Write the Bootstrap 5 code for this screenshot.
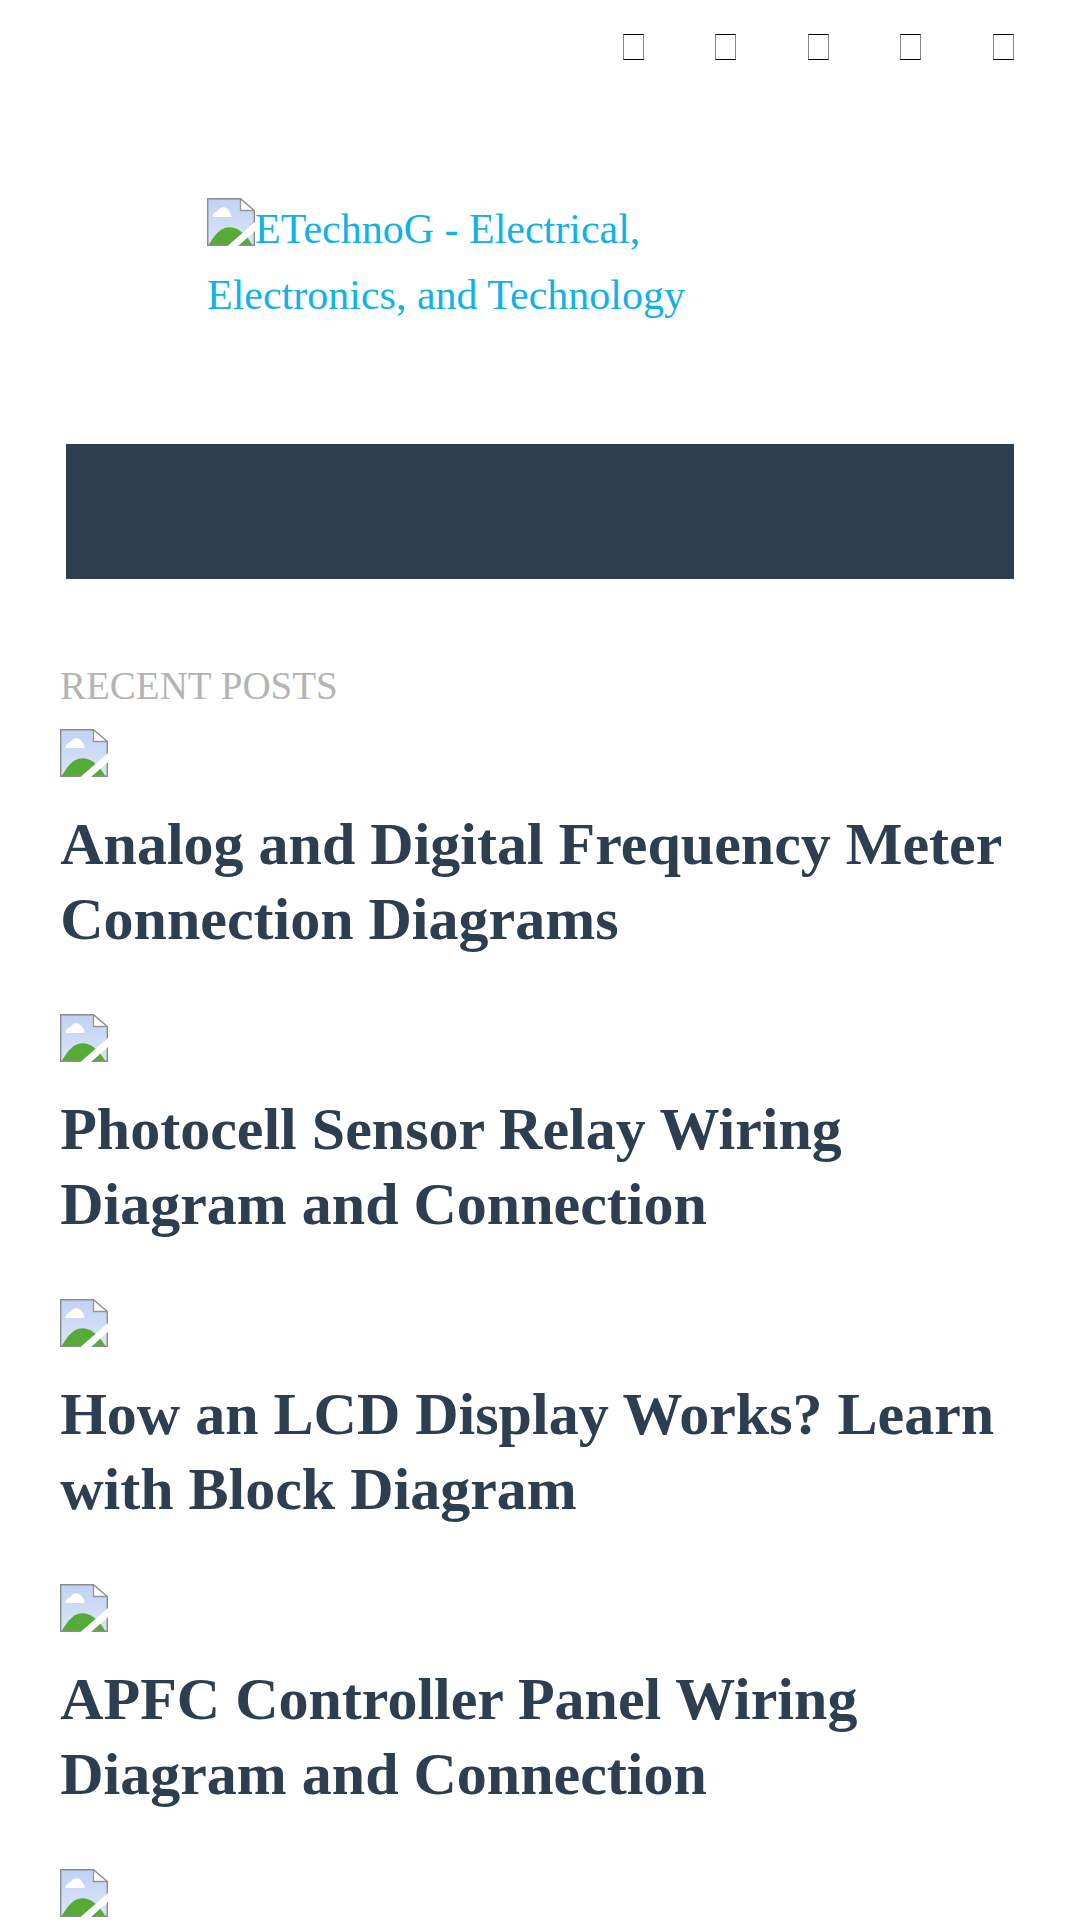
<!DOCTYPE html>
<html lang="en">
<head>
<meta charset="utf-8">
<meta name="viewport" content="width=device-width, initial-scale=1">
<title>ETechnoG - Electrical, Electronics, and Technology</title>
<link href="https://cdn.jsdelivr.net/npm/bootstrap@5.3.0/dist/css/bootstrap.min.css" rel="stylesheet">
<style>
html, body { height: 1920px; overflow: hidden; }
body { font-family: "Liberation Serif", serif; color: #2c3e50; background: #fff; }
a { text-decoration: none; }
.social-bar { height: 196px; padding: 34px 66px 0 0; gap: 71.6px; }
.social-link { width: 21px; height: 26px; border: 1px solid #000; border-left-color: #888; border-right-color: #888; }
.site-logo { height: 248px; padding-left: 207px; }
.site-logo a { display: block; width: 500px; font-size: 42px; line-height: 66px; color: #12b1e8; }
.site-logo .thumb-icon { vertical-align: -3px; }
.thumb-icon { width: 48px; height: 48px; }
.main-nav { height: 135px; margin: 0 66px; background: #2c3e50; }
.recent { padding: 84px 60px 0; height: 1341px; overflow: hidden; }
.recent-title { font-size: 39px; line-height: 46px; color: #b4b4b4; margin-bottom: 20px; }
.post-item { height: 285px; }
.post-item:last-child { height: 48px; }
.post-title { font-size: 60px; line-height: 75px; font-weight: 700; margin: 30px -6px 0 0; padding-left: .2px; }
.post-title a { color: #2c3e50; }
</style>
<script src="https://cdn.jsdelivr.net/npm/bootstrap@5.3.0/dist/js/bootstrap.bundle.min.js"></script>
</head>
<body>
<svg width="0" height="0" class="position-absolute" aria-hidden="true">
  <defs>
    <linearGradient id="sky" x1="0" y1="0" x2="0" y2="1"><stop offset="0" stop-color="#c0d2f4"/><stop offset="1" stop-color="#dce4f7"/></linearGradient>
  </defs>
  <symbol id="thumb" viewBox="0 0 48 48">
    <path d="M.7.7H33.5L47.3 12.5V47.3H.7Z" fill="url(#sky)"/>
    <path d="M5.500 19C5.500 15.500 8 14 10.500 13C12 10.500 13.500 9.200 16 9.200C19 9.200 21.500 11 22.300 13.500C24 15 24.500 17 24.500 19Z" fill="#fff"/>
    <path d="M1.500 47.300C6 39.500 10 34.500 14.500 31.500Q22.500 27 31 31.500C37 35 42 41 45.500 47.300Z" fill="#55ab36"/>
    <path d="M33.500 .7L47.300 12.500H33.500Z" fill="#fff"/>
    <path d="M33.500 .7V12.500H47.300" fill="none" stroke="#969696" stroke-width="1.300"/>
    <path d="M.7.7H33.500L47.300 12.500V47.300H.7Z" fill="none" stroke="#8c8c8c" stroke-width="1.400"/>
    <path d="M20.500 48L48 24V33L31 48Z" fill="#fff"/>
  </symbol>
</svg>
<header>
  <div class="social-bar d-flex justify-content-end">
    <a class="social-link" href="#"></a><a class="social-link" href="#"></a><a class="social-link" href="#"></a><a class="social-link" href="#"></a><a class="social-link" href="#"></a>
  </div>
  <div class="site-logo"><a href="#"><svg class="thumb-icon"><use href="#thumb"/></svg>ETechnoG - Electrical, Electronics, and Technology</a></div>
  <nav class="main-nav"></nav>
</header>
<main class="recent">
  <h2 class="recent-title fw-normal text-uppercase">Recent Posts</h2>
  <article class="post-item"><svg class="thumb-icon d-block"><use href="#thumb"/></svg><h3 class="post-title"><a href="#">Analog and Digital Frequency Meter Connection Diagrams</a></h3></article>
  <article class="post-item"><svg class="thumb-icon d-block"><use href="#thumb"/></svg><h3 class="post-title"><a href="#">Photocell Sensor Relay Wiring Diagram and Connection</a></h3></article>
  <article class="post-item"><svg class="thumb-icon d-block"><use href="#thumb"/></svg><h3 class="post-title"><a href="#">How an LCD Display Works? Learn with Block Diagram</a></h3></article>
  <article class="post-item"><svg class="thumb-icon d-block"><use href="#thumb"/></svg><h3 class="post-title"><a href="#">APFC Controller Panel Wiring Diagram and Connection</a></h3></article>
  <article class="post-item"><svg class="thumb-icon d-block"><use href="#thumb"/></svg></article>
</main>
</body>
</html>
